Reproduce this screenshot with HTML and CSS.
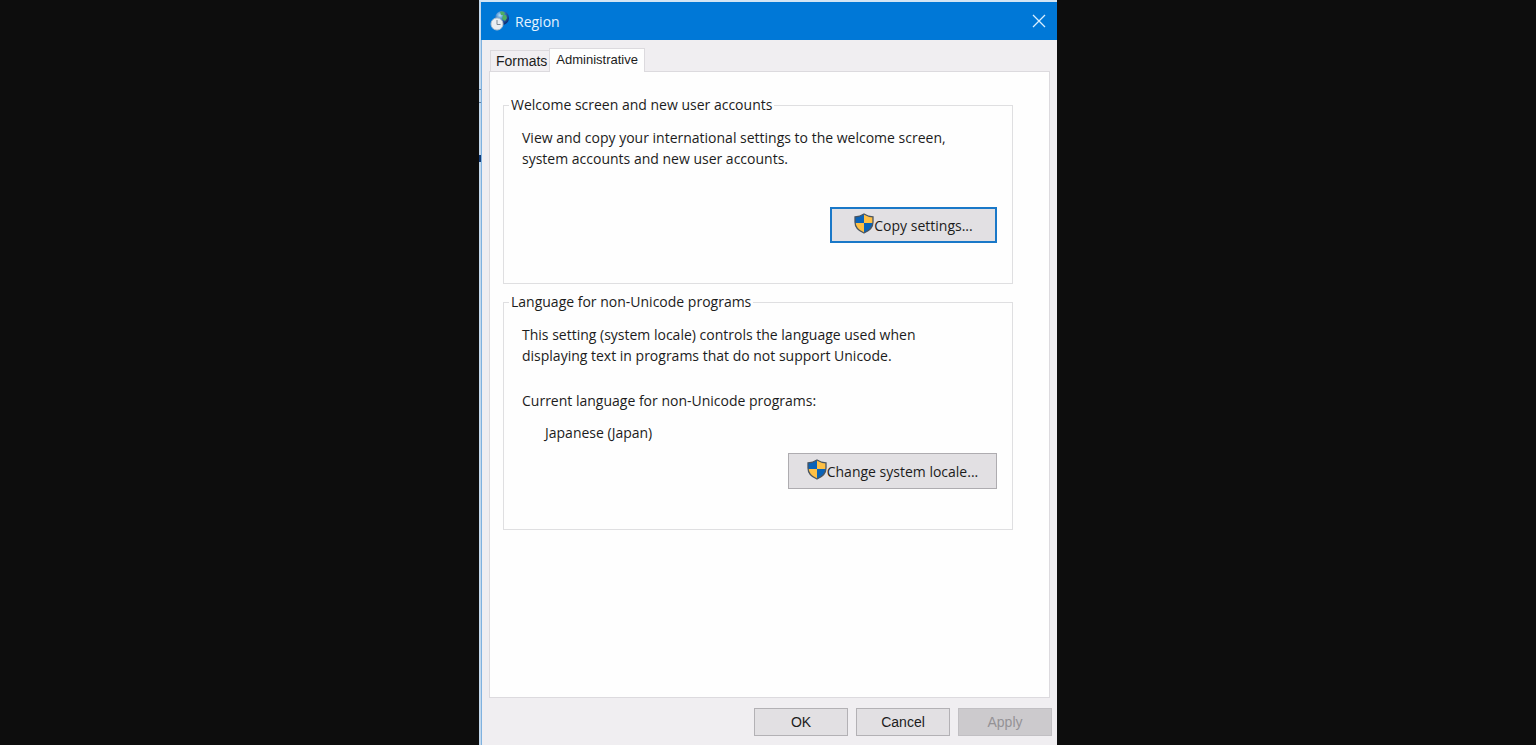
FILE: index.html
```
<!DOCTYPE html>
<html lang="en">
<head>
	<meta charset="utf-8">
	<title>Region</title>
	<link rel="stylesheet" href="styles.css">
</head>
<body>
	<!-- shield symbol shared by the buttons that need admin rights -->
	<svg class="symbols" aria-hidden="true">
		<symbol id="shield" viewBox="0 0 20 21">
			<clipPath id="shield-shape">
				<path d="M10 1C7.500 2.600 4.500 3.600 1 3.800V9c0 5.200 3.600 8.800 9 11 5.400-2.200 9-5.800 9-11V3.800C15.500 3.600 12.500 2.600 10 1z"/>
			</clipPath>
			<g clip-path="url(#shield-shape)">
				<path fill="#0a63b8" d="M0 0h10v10H0zM10 10h10v11H10z"/>
				<path fill="#ffc044" d="M10 0h10v10H10zM0 10h10v11H0z"/>
			</g>
			<path fill="none" stroke="#4a5560" stroke-width="1.300" d="M10 1C7.500 2.600 4.500 3.600 1 3.800V9c0 5.200 3.600 8.800 9 11 5.400-2.200 9-5.800 9-11V3.800C15.500 3.600 12.500 2.600 10 1z"/>
		</symbol>
	</svg>

	<main class="dialog">
		<header class="titlebar">
			<svg class="app-icon" viewBox="0 0 20 22" aria-hidden="true">
				<defs>
					<radialGradient id="sea" cx="35%" cy="30%" r="70%">
						<stop offset="0" stop-color="#b5e2fa"/>
						<stop offset="0.450" stop-color="#3f80c8"/>
						<stop offset="1" stop-color="#0f2f74"/>
					</radialGradient>
				</defs>
				<circle cx="12" cy="8" r="7" fill="url(#sea)"/>
				<path fill="#4fae62" d="M10 2c2-1 4 0 5 1l-1 2-3 0zM13 5l3 0 1 3-2 3-3-2z"/>
				<circle cx="7" cy="14" r="6" fill="#e9eef2" stroke="#b4c2cd"/>
				<path fill="none" stroke="#7b8893" d="M7 10v4.500h3.500"/>
			</svg>
			<h1>Region</h1>
			<button type="button" class="close" aria-label="Close">
				<svg viewBox="0 0 14 14" aria-hidden="true"><path d="M1 1l12 12M13 1L1 13"/></svg>
			</button>
		</header>

		<div class="tabs" role="tablist">
			<button type="button" class="tab" role="tab" aria-selected="false">Formats</button>
			<button type="button" class="tab active" role="tab" aria-selected="true">Administrative</button>
		</div>

		<section class="panel">
			<fieldset class="group">
				<legend>Welcome screen and new user accounts</legend>
				<p>View and copy your international settings to the welcome screen, system accounts and new user accounts.</p>
				<div class="actions welcome-actions">
					<button type="button" class="admin-btn focused"><svg class="shield" aria-hidden="true"><use href="#shield"/></svg>Copy settings...</button>
				</div>
			</fieldset>

			<fieldset class="group">
				<legend>Language for non-Unicode programs</legend>
				<p>This setting (system locale) controls the language used when displaying text in programs that do not support Unicode.</p>
				<p class="current">Current language for non-Unicode programs:</p>
				<p class="locale">Japanese (Japan)</p>
				<div class="actions">
					<button type="button" class="admin-btn wide"><svg class="shield" aria-hidden="true"><use href="#shield"/></svg>Change system locale...</button>
				</div>
			</fieldset>
		</section>

		<footer class="buttons">
			<button type="button" class="btn">OK</button>
			<button type="button" class="btn">Cancel</button>
			<button type="button" class="btn" disabled>Apply</button>
		</footer>
	</main>
</body>
</html>
```
FILE: styles.css
```
* {
	box-sizing: border-box;
}
body {
	margin: 0;
	background-color: #0d0d0d;
	color: #1c1c1c;
	font-family: "Open Sans", "Noto Sans", sans-serif;
	font-size: 14px;
	line-height: 21px;
}
button {
	font: inherit;
	color: inherit;
}
.symbols {
	position: absolute;
	width: 0;
	height: 0;
}
.dialog {
	position: relative;
	display: flex;
	flex-direction: column;
	max-width: 578px;
	min-height: 100vh;
	margin: 0 auto;
	background-color: #f0eef1;
	border-top: 2px solid #d3e5f4;
	border-left: 2px solid #c3d8ec;
	box-shadow: inset 1px 0 #7fb2e0;
}
/* slivers of the window behind, seen along the left edge */
.dialog::before, .dialog::after {
	content: "";
	position: absolute;
	left: -2px;
	width: 2px;
}
.dialog::before {
	top: 87px;
	height: 12px;
	border: solid #5d7da0;
	border-width: 1px 0;
}
.dialog::after {
	top: 153px;
	height: 7px;
	background-color: #123a75;
}

.titlebar {
	display: flex;
	align-items: center;
	height: 38px;
	padding: 0 11px 0 9px;
	background-color: #0078d7;
	color: #e4f3ff;
}
.titlebar h1 {
	flex: 1;
	margin: 0 0 0 5px;
	font-size: 14px;
	font-weight: normal;
}
.app-icon {
	width: 20px;
	height: 22px;
}
.close {
	display: flex;
	padding: 0;
	border: none;
	background: none;
}
.close svg {
	width: 14px;
	height: 14px;
	fill: none;
	stroke: #d9efff;
	stroke-width: 1.3;
}

.tabs {
	display: flex;
	align-items: flex-end;
	padding: 8px 8px 0 9px;
}
.tab {
	height: 21px;
	padding: 0 2px 0 5px;
	border: 1px solid #dcdade;
	border-width: 1px 0 0 1px;
	background-color: #f1eff2;
	font-family: "Liberation Sans", Arial, sans-serif;
	font-size: 14px;
	line-height: 20px;
}
.tab.active {
	z-index: 1;
	height: 24px;
	margin-bottom: -1px;
	padding: 0 6px 2px;
	border-width: 1px 1px 0 1px;
	background-color: #fefefe;
	font-size: 13px;
}

.panel {
	flex: 1;
	margin: 0 7px 0 8px;
	padding: 23px 36px 0 13px;
	background-color: #fefefe;
	border: 1px solid #dcdade;
}
.group {
	min-width: 0;
	margin: 0 0 8px;
	padding: 12px 15px 40px 18px;
	border: 1px solid #dfdfe1;
}
.group legend {
	margin-left: -13px;
	padding: 0 2px;
	line-height: 20px;
}
.group p {
	max-width: 440px;
	margin: 0;
}
.group .current {
	margin-top: 24px;
}
.group .locale {
	margin: 11px 0 0 23px;
}
.actions {
	display: flex;
	justify-content: flex-end;
	margin-top: 10px;
}
.welcome-actions {
	margin-top: 38px;
}
.admin-btn {
	display: flex;
	align-items: center;
	justify-content: center;
	width: 167px;
	height: 36px;
	padding: 0;
	background-color: #e2e0e3;
	border: 1px solid #aeacb0;
}
.admin-btn.wide {
	width: 209px;
}
.admin-btn.focused {
	border: 2px solid #1a78c8;
}
.shield {
	width: 20px;
	height: 21px;
	margin-bottom: 3px;
}

.buttons {
	display: flex;
	justify-content: flex-end;
	gap: 8px;
	padding: 10px 5px 9px;
}
.btn {
	width: 94px;
	height: 28px;
	padding: 0;
	background-color: #e2e0e3;
	border: 1px solid #b3b1b5;
	font-family: "Liberation Sans", Arial, sans-serif;
	font-size: 14px;
}
.btn:disabled {
	background-color: #cccacd;
	border-color: #c1bfc3;
	color: #949296;
}
```
